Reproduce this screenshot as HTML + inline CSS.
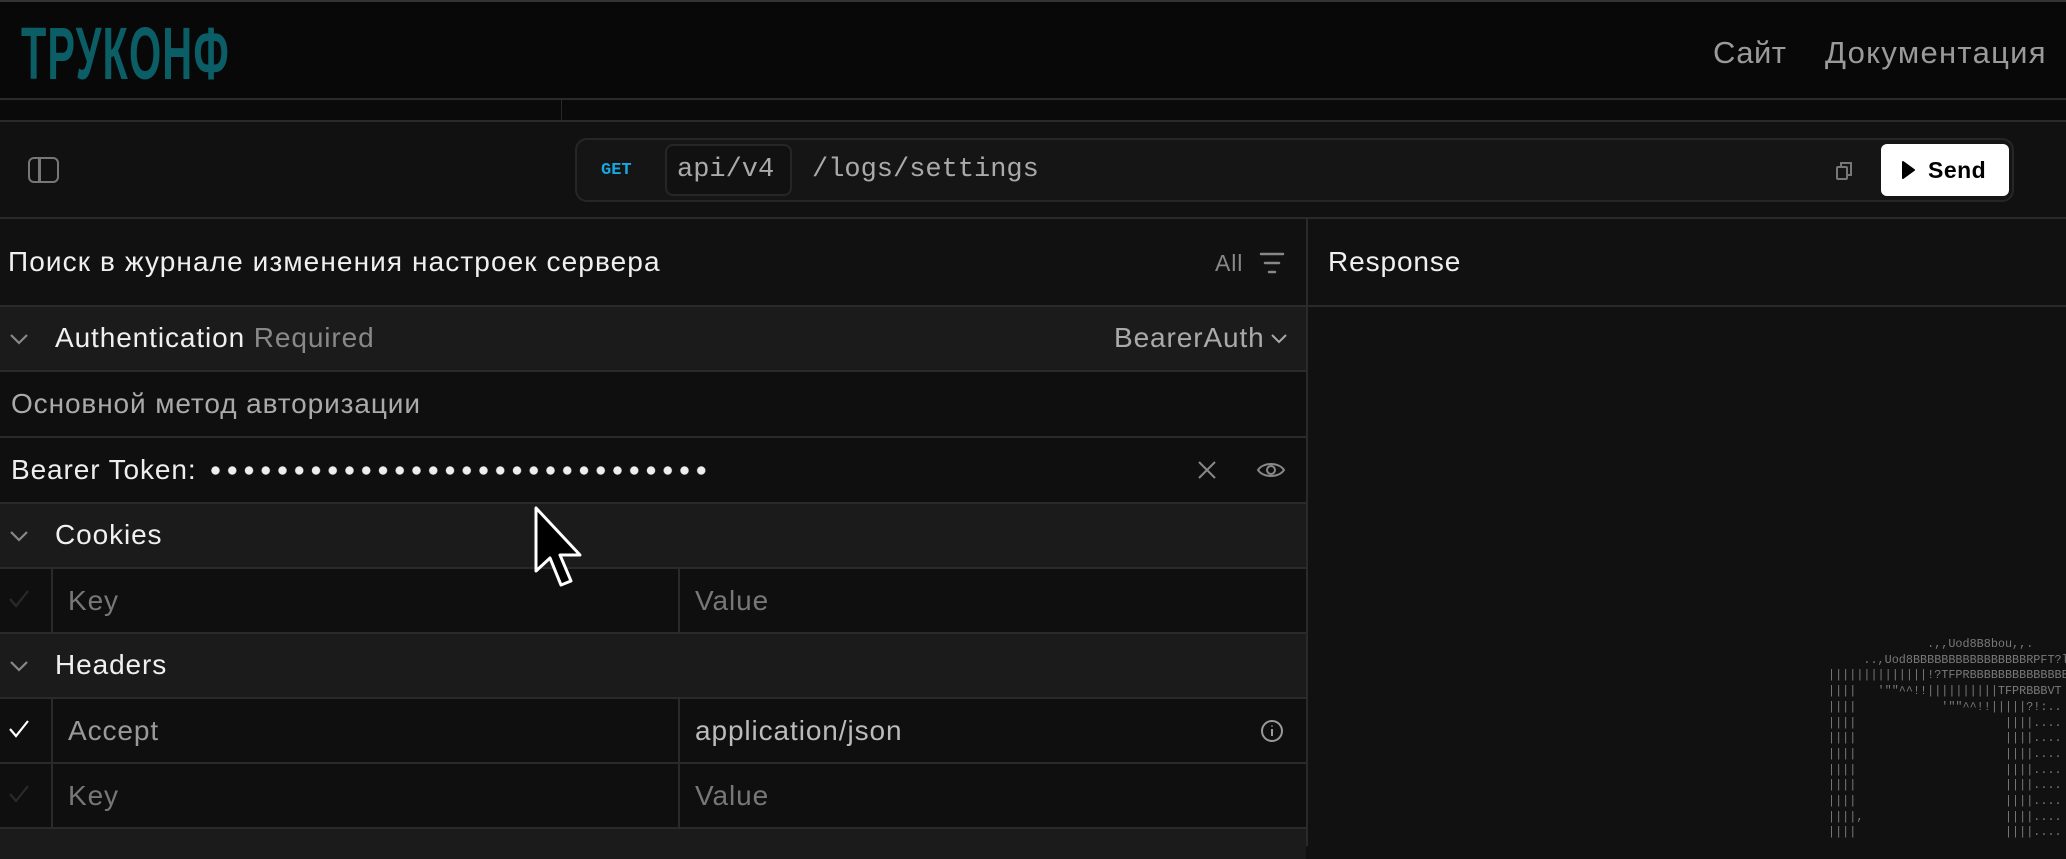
<!DOCTYPE html>
<html><head><meta charset="utf-8"><style>
*{margin:0;padding:0;box-sizing:border-box}
body{width:2066px;height:846px;overflow:hidden;background:#111;font-family:"Liberation Sans","Noto Sans CJK SC",sans-serif;position:relative;color:#eee}
.a{position:absolute}
.t{position:absolute;white-space:nowrap;font-size:28px;line-height:30px;letter-spacing:0.9px}
.row{position:absolute;left:0;width:1306px;height:65px;border-bottom:2px solid #2a2a2a}
.sec{background:#1b1b1b}
.cnt{background:#0f0f0f}
.mono{font-family:"Liberation Mono","DejaVu Sans Mono",monospace;letter-spacing:0}
</style></head><body>
<!-- header -->
<div class="a" style="left:0;top:0;width:2066px;height:100px;background:#080808;border-top:2px solid #333;border-bottom:2px solid #2a2a2a"></div>
<div class="t" style="left:21px;top:22px;font-size:74px;line-height:64px;font-weight:bold;color:#0b5d66;transform:scaleX(0.56);transform-origin:left;letter-spacing:2px">ТРУКОНФ</div>
<div class="t" style="left:1713px;top:36px;font-size:31px;line-height:34px;color:#9a9a9a;letter-spacing:0.5px">Сайт</div>
<div class="t" style="left:1825px;top:36px;font-size:31px;line-height:34px;color:#9a9a9a;letter-spacing:1.3px">Документация</div>
<!-- sub strip -->
<div class="a" style="left:0;top:100px;width:2066px;height:22px;background:#0a0a0a;border-bottom:2px solid #2a2a2a"></div>
<div class="a" style="left:561px;top:100px;width:1px;height:22px;background:#2a2a2a"></div>
<!-- toolbar -->
<div class="a" style="left:0;top:122px;width:2066px;height:97px;background:#111;border-bottom:2px solid #2a2a2a"></div>
<div class="a" style="left:28px;top:157px;width:31px;height:26px;border:2.5px solid #777;border-radius:6px"></div>
<div class="a" style="left:38px;top:158px;width:2.5px;height:24px;background:#777"></div>
<div class="a" style="left:575px;top:138px;width:1439px;height:64px;border:2px solid #262626;border-radius:12px;background:#151515"></div>
<div class="t mono" style="left:601px;top:156px;font-size:17px;color:#1aa7e0;font-weight:bold">GET</div>
<div class="a" style="left:665px;top:144px;width:127px;height:52px;border:2px solid #262626;border-radius:8px;background:#111"></div>
<div class="t mono" style="left:677px;top:155px;font-size:27px;color:#aaa">api/v4</div>
<div class="t mono" style="left:812px;top:155px;font-size:27px;color:#aaa">/logs/settings</div>
<svg class="a" style="left:1834px;top:160px" width="22" height="22" viewBox="0 0 22 22" fill="none" stroke="#777" stroke-width="2"><rect x="3" y="7" width="10" height="12" rx="1"/><path d="M7 7V3h10v12h-4"/></svg>
<div class="a" style="left:1881px;top:144px;width:128px;height:52px;background:#fff;border-radius:6px"></div>
<svg class="a" style="left:1901px;top:161px" width="14" height="18" viewBox="0 0 14 18"><path d="M2 1 L13 9 L2 17 Z" fill="#000" stroke="#000" stroke-linejoin="round" stroke-width="2"/></svg>
<div class="t" style="left:1928px;top:155px;font-size:23px;font-weight:bold;color:#000;letter-spacing:0.5px">Send</div>
<!-- title row -->
<div class="a" style="left:0;top:219px;width:2066px;height:88px;background:#111;border-bottom:2px solid #2a2a2a"></div>
<div class="a" style="left:1306px;top:219px;width:2px;height:627px;background:#2a2a2a"></div>
<div class="t" style="left:8px;top:247px;color:#f0f0f0;letter-spacing:1.1px">Поиск в журнале изменения настроек сервера</div>
<div class="t" style="left:1215px;top:248px;font-size:23px;color:#888">All</div>
<svg class="a" style="left:1258px;top:250px" width="28" height="26" viewBox="0 0 28 26" stroke="#888" stroke-width="2.5" stroke-linecap="round"><path d="M3 4h22M7 13h14M11 22h6"/></svg>
<div class="t" style="left:1328px;top:247px;color:#f0f0f0">Response</div>
<!-- left rows -->
<div class="row sec" style="top:307px;height:65px"></div>
<div class="row cnt" style="top:372px;height:66px"></div>
<div class="row cnt" style="top:438px;height:66px"></div>
<div class="row sec" style="top:504px;height:65px"></div>
<div class="row cnt" style="top:569px;height:65px"></div>
<div class="row sec" style="top:634px;height:65px"></div>
<div class="row cnt" style="top:699px;height:65px"></div>
<div class="row cnt" style="top:764px;height:65px"></div>
<div class="row sec" style="top:829px;height:30px;border:none"></div>
<!-- chevrons -->
<svg class="a" style="left:9px;top:332px" width="20" height="14" viewBox="0 0 20 14" fill="none" stroke="#888" stroke-width="2.2"><path d="M2 3l8 8 8-8"/></svg>
<svg class="a" style="left:9px;top:529px" width="20" height="14" viewBox="0 0 20 14" fill="none" stroke="#888" stroke-width="2.2"><path d="M2 3l8 8 8-8"/></svg>
<svg class="a" style="left:9px;top:659px" width="20" height="14" viewBox="0 0 20 14" fill="none" stroke="#888" stroke-width="2.2"><path d="M2 3l8 8 8-8"/></svg>
<div class="t" style="left:55px;top:323px;color:#f0f0f0">Authentication <span style="color:#888">Required</span></div>
<div class="t" style="left:1114px;top:323px;color:#aaa">BearerAuth</div>
<svg class="a" style="left:1270px;top:333px" width="18" height="12" viewBox="0 0 18 12" fill="none" stroke="#aaa" stroke-width="2"><path d="M2 2l7 7 7-7"/></svg>
<div class="t" style="left:11px;top:389px;color:#aaa">Основной метод авторизации</div>
<div class="t" style="left:11px;top:455px;color:#eee">Bearer Token:</div>
<div class="a" style="left:211px;top:466px;width:502px;height:9px;background:radial-gradient(circle at 4.5px 4.5px,#eee 3.8px,transparent 4.5px);background-size:16.75px 9px"></div>
<svg class="a" style="left:1196px;top:459px" width="22" height="22" viewBox="0 0 22 22" stroke="#888" stroke-width="2"><path d="M3 3l16 16M19 3L3 19"/></svg>
<svg class="a" style="left:1256px;top:459px" width="30" height="22" viewBox="0 0 30 22" fill="none" stroke="#888" stroke-width="2"><path d="M2 11C7 3 23 3 28 11C23 19 7 19 2 11Z"/><circle cx="15" cy="11" r="4"/></svg>
<div class="t" style="left:55px;top:520px;color:#f0f0f0">Cookies</div>
<div class="t" style="left:55px;top:650px;color:#f0f0f0">Headers</div>
<!-- table dividers -->
<div class="a" style="left:51px;top:569px;width:2px;height:64px;background:#2a2a2a"></div>
<div class="a" style="left:678px;top:569px;width:2px;height:64px;background:#2a2a2a"></div>
<div class="a" style="left:51px;top:699px;width:2px;height:129px;background:#2a2a2a"></div>
<div class="a" style="left:678px;top:699px;width:2px;height:129px;background:#2a2a2a"></div>
<svg class="a" style="left:8px;top:589px" width="22" height="20" viewBox="0 0 22 20" fill="none" stroke="#2a2a2a" stroke-width="2.2"><path d="M2 10l6 7L20 2"/></svg>
<svg class="a" style="left:8px;top:719px" width="22" height="20" viewBox="0 0 22 20" fill="none" stroke="#fff" stroke-width="2.2"><path d="M2 10l6 7L20 2"/></svg>
<svg class="a" style="left:8px;top:784px" width="22" height="20" viewBox="0 0 22 20" fill="none" stroke="#2a2a2a" stroke-width="2.2"><path d="M2 10l6 7L20 2"/></svg>
<div class="t" style="left:68px;top:586px;color:#777">Key</div>
<div class="t" style="left:695px;top:586px;color:#777">Value</div>
<div class="t" style="left:68px;top:716px;color:#999">Accept</div>
<div class="t" style="left:695px;top:716px;color:#bbb">application/json</div>
<svg class="a" style="left:1260px;top:719px" width="24" height="24" viewBox="0 0 24 24" fill="none" stroke="#999" stroke-width="2"><circle cx="12" cy="12" r="10"/><path d="M12 10v7M12 6.5v1"/></svg>
<div class="t" style="left:68px;top:781px;color:#777">Key</div>
<div class="t" style="left:695px;top:781px;color:#777">Value</div>
<!-- cursor -->
<svg class="a" style="left:533px;top:505px" width="56" height="86" viewBox="0 0 56 86"><path d="M3 3 L3 66 L17 53 L28 80 L38 76 L27 50 L47 50 Z" fill="#000" stroke="#fff" stroke-width="3" stroke-linejoin="round"/></svg>
<!-- ascii -->
<pre class="a mono" style="left:1828px;top:637px;font-size:11.8px;line-height:15.7px;color:#7a7a7a">              .,,Uod8B8bou,,.
     ..,Uod8BBBBBBBBBBBBBBBBRPFT?l!
||||||||||||||!?TFPRBBBBBBBBBBBBBBBBBB
||||   '""^^!!||||||||||TFPRBBBVT
||||            '""^^!!|||||?!:..
||||                     ||||....
||||                     ||||....
||||                     ||||....
||||                     ||||....
||||                     ||||....
||||                     ||||....
||||,                    ||||....
||||                     ||||....</pre>
</body></html>
